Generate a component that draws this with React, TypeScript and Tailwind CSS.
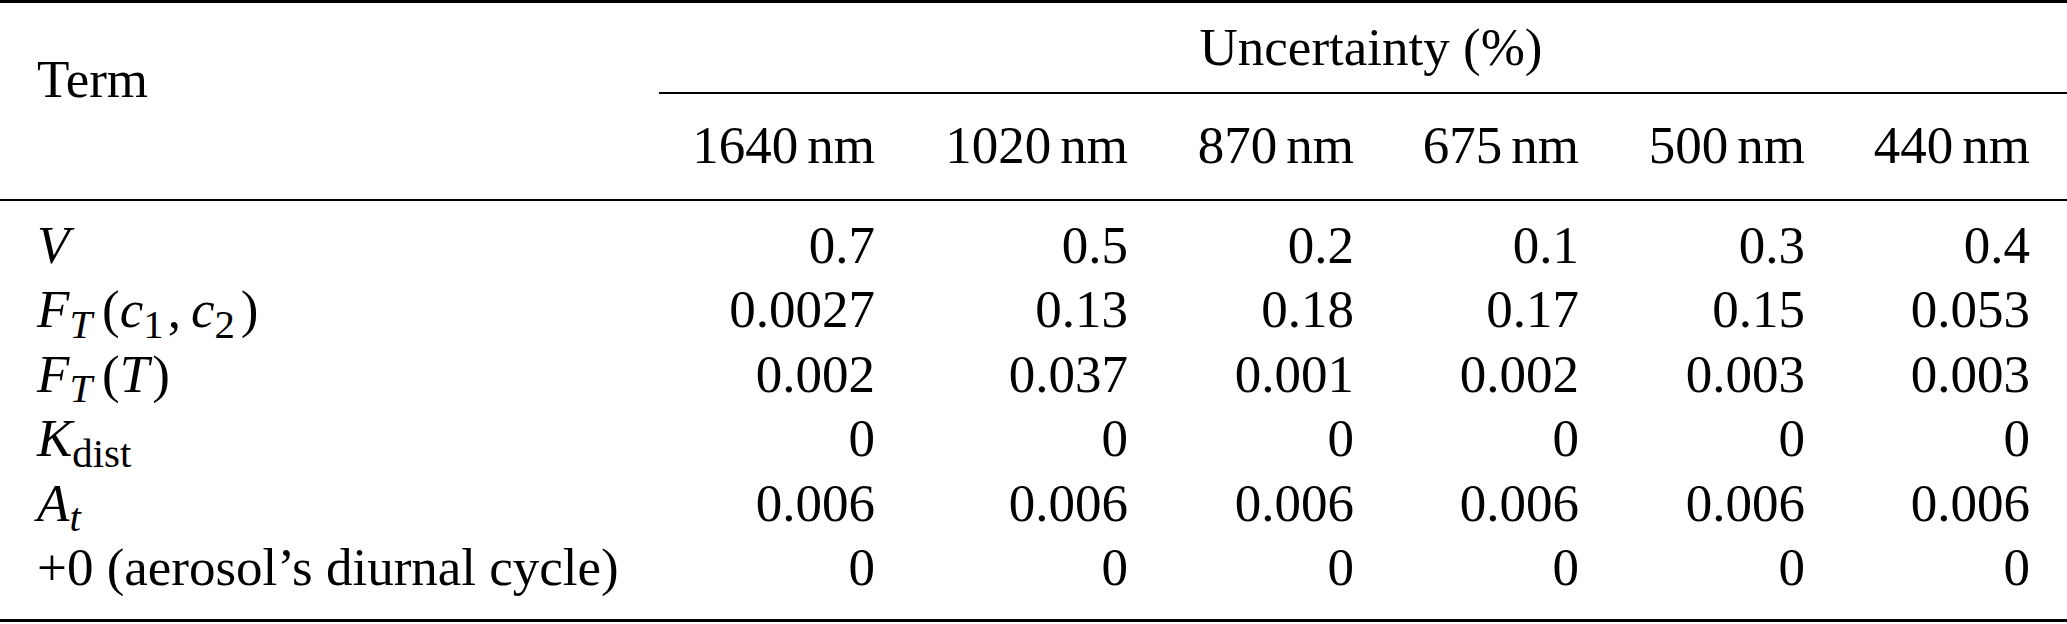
import React from "react";

const Sub = ({ children, italic = false }: { children: React.ReactNode; italic?: boolean }) => (
  <span className={`relative top-[0.26em] text-[0.77em] leading-none ${italic ? "italic" : "not-italic"}`}>{children}</span>
);

const waves = ["1640", "1020", "870", "675", "500", "440"];

const rows: { term: React.ReactNode; vals: string[] }[] = [
  { term: <i>V</i>, vals: ["0.7", "0.5", "0.2", "0.1", "0.3", "0.4"] },
  {
    term: (
      <span>
        <i>F</i>
        <Sub italic>T</Sub>
        <span className="ml-[10px]">(</span>
        <i>c</i>
        <Sub>1</Sub>
        <span className="ml-[4px]">,</span>
        <i className="ml-[10px]">c</i>
        <Sub>2</Sub>
        <span className="ml-[6px]">)</span>
      </span>
    ),
    vals: ["0.0027", "0.13", "0.18", "0.17", "0.15", "0.053"],
  },
  {
    term: (
      <span>
        <i>F</i>
        <Sub italic>T</Sub>
        <span className="ml-[10px]">(</span>
        <i>T</i>
        <span className="ml-[3px]">)</span>
      </span>
    ),
    vals: ["0.002", "0.037", "0.001", "0.002", "0.003", "0.003"],
  },
  {
    term: (
      <span>
        <i>K</i>
        <Sub>dist</Sub>
      </span>
    ),
    vals: ["0", "0", "0", "0", "0", "0"],
  },
  {
    term: (
      <span>
        <i>A</i>
        <Sub italic>t</Sub>
      </span>
    ),
    vals: ["0.006", "0.006", "0.006", "0.006", "0.006", "0.006"],
  },
  { term: <span>+0 (aerosol’s diurnal cycle)</span>, vals: ["0", "0", "0", "0", "0", "0"] },
];

export default function App() {
  return (
    <div className="w-[2067px] h-[624px] bg-white text-black font-['Liberation_Serif','Times_New_Roman',serif] text-[53px] leading-[64px]">
      <div className="h-[3px] bg-black" />
      <div className="grid grid-cols-[659px_1408px]">
        <div className="pl-[37px] pt-[44px]">Term</div>
        <div className="flex flex-col pt-[12px] pb-[22px]">
          <div className="text-center pl-[16px]">Uncertainty (%)</div>
          <div className="mt-[13px] h-[2px] bg-black" />
          <div className="mt-[19px] grid grid-cols-[253px_253px_226px_225px_226px_225px]">
            {waves.map((w) => (
              <div key={w} className="text-right pr-[37px] whitespace-nowrap">
                {w}
                <span className="ml-[9px]">nm</span>
              </div>
            ))}
          </div>
        </div>
      </div>
      <div className="h-[2px] bg-black" />
      <div className="pt-[12px] pb-[20px] leading-[64.4px]">
        {rows.map((r, i) => (
          <div key={i} className="grid grid-cols-[659px_253px_253px_226px_225px_226px_225px]">
            <div className="pl-[37px] whitespace-nowrap">{r.term}</div>
            {r.vals.map((v, j) => (
              <div key={j} className="text-right pr-[37px]">
                {v}
              </div>
            ))}
          </div>
        ))}
      </div>
      <div className="h-[3px] bg-black" />
    </div>
  );
}
